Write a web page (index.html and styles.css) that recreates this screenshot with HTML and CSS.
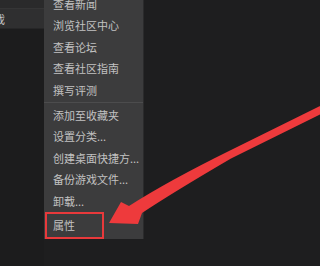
FILE: index.html
```html
<!DOCTYPE html>
<html lang="zh-CN">
<head>
<meta charset="utf-8">
<title>菜单</title>
<link rel="stylesheet" href="styles.css">
</head>
<body>
<div class="page">
  <div class="side">
    <div class="side-top"></div>
    <div class="side-sel"><span class="side-text">戏</span></div>
    <div class="side-rest"></div>
  </div>
  <ul class="menu">
    <li class="item">查看新闻</li>
    <li class="item">浏览社区中心</li>
    <li class="item">查看论坛</li>
    <li class="item">查看社区指南</li>
    <li class="item">撰写评测</li>
    <li class="sep"></li>
    <li class="item">添加至收藏夹</li>
    <li class="item">设置分类...</li>
    <li class="item">创建桌面快捷方...</li>
    <li class="item">备份游戏文件...</li>
    <li class="item">卸载...</li>
    <li class="item item-last"><span class="mark">属性</span></li>
  </ul>
  <div class="rest"></div>
  <svg class="arrow" width="340" height="266" viewBox="0 0 340 266">
    <path d="M340,96 L231,150 Q168,181 129,206 L121,202 L109,223 L138,224 L142,213 Q172,193 231,158.5 L340,104.5 Z" fill="#ee3a3c"/>
  </svg>
</div>
</body>
</html>
```

FILE: styles.css
```css
html, body {
  margin: 0;
  padding: 0;
  background: #1e1e1f;
}
.page {
  position: relative;
  display: flex;
  min-width: 231px;
  height: 266px;
  overflow: hidden;
  font-family: "Noto Sans CJK SC", "Noto Sans", sans-serif;
}
.side {
  width: 44px;
  display: flex;
  flex-direction: column;
  flex: none;
}
.side-top {
  height: 8px;
  background: #2a2a2b;
  border-bottom: 1px solid #353536;
}
.side-sel {
  height: 19px;
  background: #2f2f30;
  border-bottom: 1px solid #262627;
  display: flex;
  align-items: center;
  overflow: hidden;
}
.side-text {
  margin-left: -6px;
  font-size: 11px;
  color: #c4c4c4;
}
.side-rest {
  flex: 1;
  background: #1c1c1d;
}
.menu {
  list-style: none;
  margin: -6px 0 0 0;
  padding: 0;
  width: 100px;
  height: 245px;
  flex: none;
  background: #3c3c3d;
  border-right: 1px solid #2b2b2c;
  box-sizing: border-box;
}
.item {
  height: 21.4px;
  line-height: 21.4px;
  padding-left: 9px;
  font-size: 11px;
  color: #c2c2c2;
  white-space: nowrap;
}
.sep {
  height: 1px;
  background: #4c4c4d;
  margin: 1px 0 2px 0;
}
.item-last {
  height: 27px;
  line-height: normal;
  padding-left: 1px;
  display: flex;
}
.mark {
  box-sizing: border-box;
  width: 59px;
  height: 27px;
  border: 2px solid #e8393b;
  padding-left: 6px;
  display: flex;
  align-items: center;
}
.rest {
  flex: 1;
  background: #1e1e1f;
}
.arrow {
  position: absolute;
  left: 0;
  top: 0;
  pointer-events: none;
}
```
